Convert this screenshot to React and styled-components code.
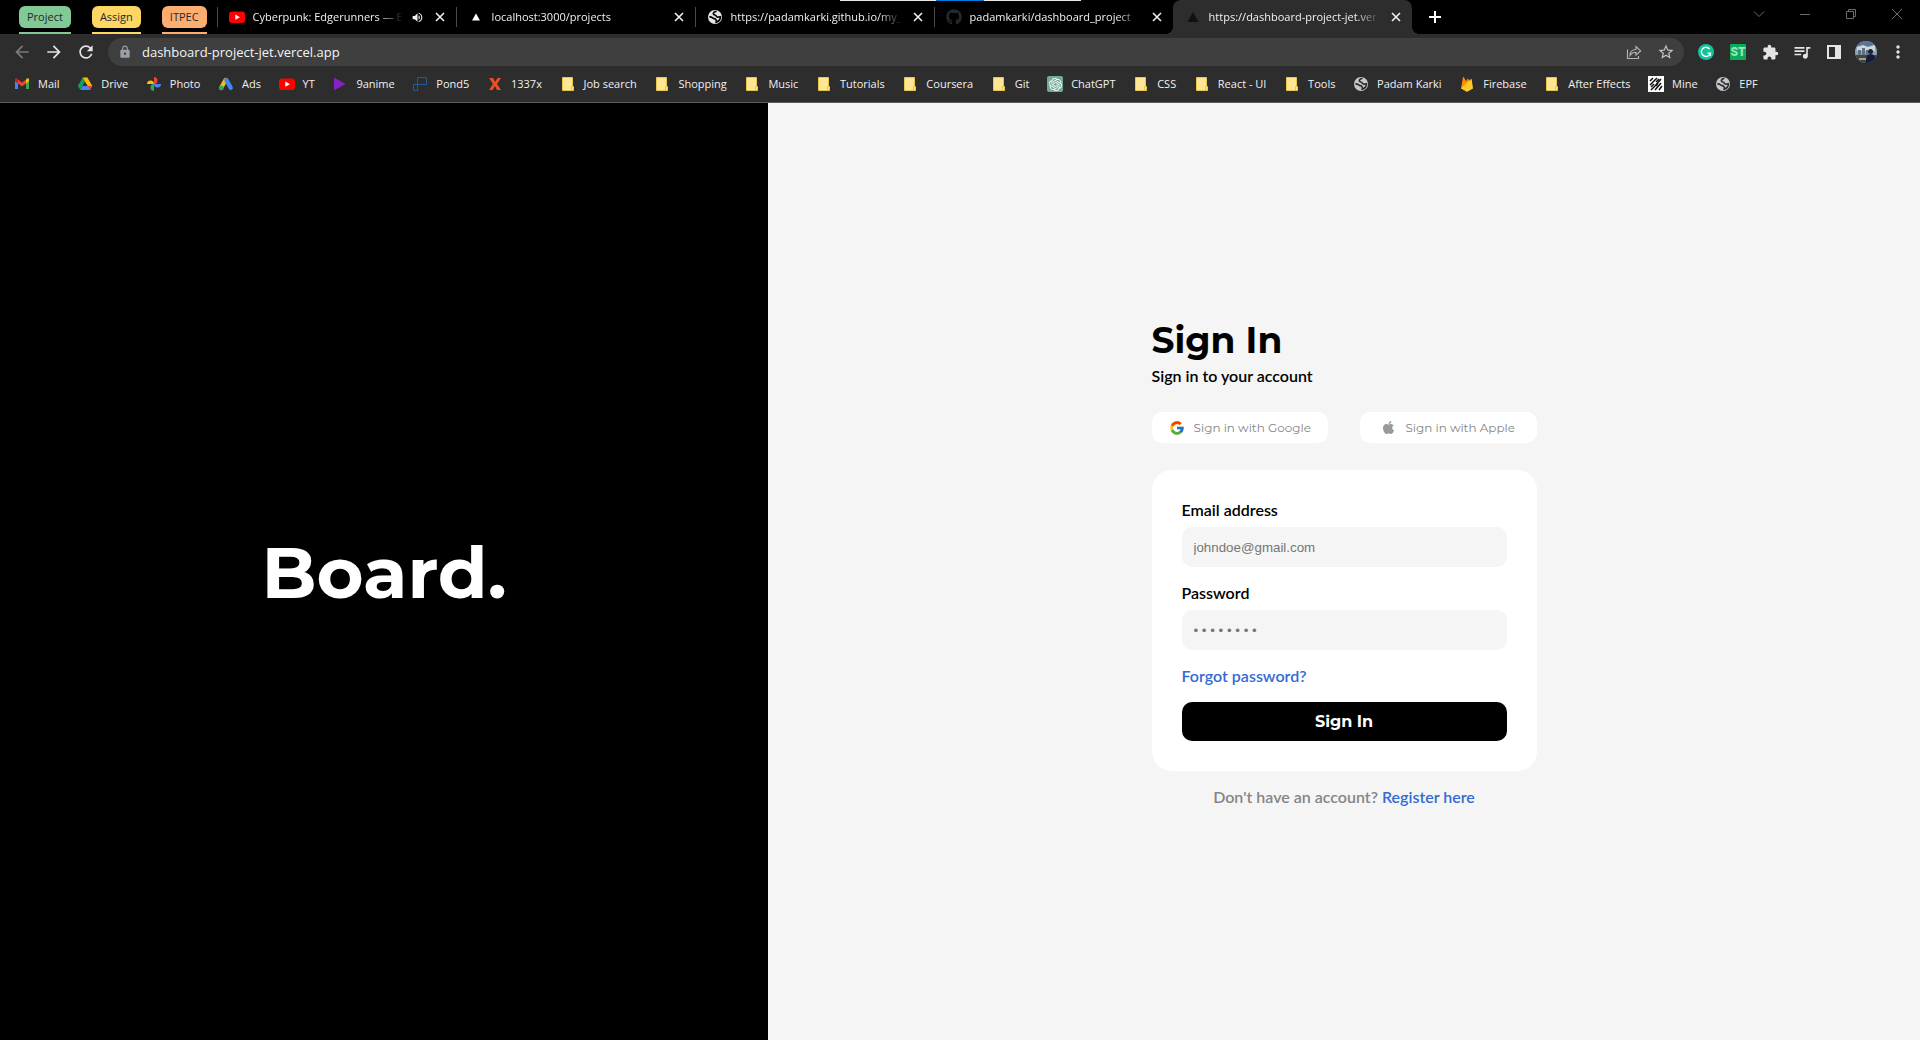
import React from "react";
import styled, { createGlobalStyle, css } from "styled-components";
import { FcGoogle } from "react-icons/fc";
import { FaApple, FaGithub } from "react-icons/fa";
import { SiOpenai } from "react-icons/si";
import {
  MdArrowBack,
  MdArrowForward,
  MdRefresh,
  MdLock,
  MdStarOutline,
  MdExtension,
  MdQueueMusic,
  MdMoreVert,
  MdVolumeUp,
} from "react-icons/md";

const GlobalStyle = createGlobalStyle`
  *, *::before, *::after { box-sizing: border-box; }
  body { margin: 0; background: #f5f5f5; }
  button { font: inherit; cursor: pointer; }
  button, input { margin: 0; border: 0; padding: 0; background: none; color: inherit; outline: none; }
  a { text-decoration: none; color: inherit; }
  svg { display: block; flex: none; }
`;

const uiFont = `"Segoe UI", "Open Sans", "Noto Sans", sans-serif`;
const headingFont = `Montserrat, Inter, sans-serif`;
const bodyFont = `Lato, sans-serif`;

/* ---------- browser chrome ---------- */

const Screen = styled.div`
  min-height: 100vh;
  display: flex;
  flex-direction: column;
`;

const Chrome = styled.header`
  position: relative;
  font: 11px/16px ${uiFont};
  color: #f1f1f1;
  background: #2d2d2d;
  border-bottom: 1px solid #5c5c5c;
`;

const LoadingLine = styled.div`
  position: absolute;
  top: 0;
  left: 840px;
  width: 241px;
  height: 1px;
  background: linear-gradient(90deg, #e8e8e8 96px, #0078d7 96px 144px, #e8e8e8 144px);
`;

const TabStrip = styled.div`
  display: flex;
  height: 34px;
  background: #000;
`;

const Groups = styled.div`
  display: flex;
  gap: 21px;
  padding: 6px 10px 0 19px;
  flex: none;
`;

const Group = styled.button`
  display: flex;
  flex-direction: column;
  justify-content: space-between;
  height: 28px;
  color: #24292c;
  border-bottom: 2px solid ${(p) => p.$color};

  span {
    height: 22px;
    padding: 0 8px;
    border-radius: 6px;
    line-height: 21px;
    background: ${(p) => p.$color};
  }
`;

const flare = css`
  content: "";
  position: absolute;
  bottom: 0;
  width: 8px;
  height: 8px;
`;

const Tab = styled.div`
  position: relative;
  display: flex;
  align-items: center;
  flex: 0 1 239px;
  min-width: 0;
  padding: 0 8px 0 12px;

  ${(p) =>
    p.$active
      ? css`
          background: #2d2d2d;
          border-radius: 8px 8px 0 0;
          &::before {
            ${flare}
            left: -8px;
            background: radial-gradient(circle at 0 0, transparent 8px, #2d2d2d 8px);
          }
          &::after {
            ${flare}
            right: -8px;
            background: radial-gradient(circle at 100% 0, transparent 8px, #2d2d2d 8px);
          }
        `
      : css`
          background: linear-gradient(#4a4a4a, #4a4a4a) left 7px / 1px 20px no-repeat;
        `}
`;

const TabButton = styled.button`
  flex: 1;
  min-width: 0;
  display: flex;
  align-items: center;
  gap: 8px;
  height: 34px;
  text-align: left;

  span {
    flex: 1;
    overflow: hidden;
    white-space: nowrap;
    mask-image: linear-gradient(90deg, #000 calc(100% - 24px), transparent);
  }
`;

const CloseButton = styled.button`
  width: 16px;
  height: 16px;
  display: grid;
  place-items: center;
  margin-left: 8px;
`;

const NewTab = styled.button`
  width: 28px;
  display: grid;
  place-items: center;
  margin-left: 9px;
`;

const WindowButtons = styled.div`
  display: flex;
  margin-left: auto;
  height: 28px;
  color: #6b6b6b;

  button {
    width: 46px;
    display: grid;
    place-items: center;
  }
`;

const Toolbar = styled.div`
  display: flex;
  align-items: center;
  height: 32px;
  padding: 4px 6px 0;
`;

const ToolButton = styled.button`
  width: 32px;
  height: 28px;
  flex: none;
  display: grid;
  place-items: center;
  color: ${(p) => p.$color || "#e4e4e4"};
`;

const NavButtons = styled.div`
  display: flex;
  padding-right: 6px;
`;

const AddressBar = styled.label`
  flex: 1;
  display: flex;
  align-items: center;
  height: 28px;
  padding: 0 2px 0 10px;
  border-radius: 14px;
  background: #3f3f3f;
  color: #9aa0a6;
  margin-right: 6px;

  input {
    flex: 1;
    height: 28px;
    padding-left: 10px;
    font: 13px/16px ${uiFont};
    color: #f4f4f4;
  }
`;

const Bookmarks = styled.nav`
  display: flex;
  align-items: center;
  justify-content: space-between;
  max-width: 1772px;
  height: 36px;
  padding: 0 14px;
  gap: 16px;
  white-space: nowrap;
`;

const Bookmark = styled.a`
  display: flex;
  align-items: center;
  gap: 8px;
`;

/* ---------- page ---------- */

const Page = styled.main`
  flex: 1;
  display: grid;
  grid-template-columns: 2fr 3fr;
  background: #f5f5f5;
`;

const Brand = styled.section`
  display: grid;
  place-items: center;
  background: #000;
  color: #fff;
  font: 700 72px/88px ${headingFont};
`;

const FormSide = styled.section`
  display: flex;
  align-items: center;
  justify-content: center;
  font: 600 16px/20px ${bodyFont};
  color: #000;
`;

const Column = styled.div`
  width: 385px;
  padding-bottom: 18px;
`;

const Title = styled.h1`
  margin: 0 0 4px;
  font: 700 36px/44px ${headingFont};
`;

const Subtitle = styled.p`
  margin: 0;
`;

const Providers = styled.div`
  display: grid;
  grid-template-columns: 1fr 1fr;
  gap: 32px;
  margin: 26px 0 27px;
`;

const Provider = styled.button`
  display: flex;
  align-items: center;
  justify-content: center;
  gap: 9px;
  height: 31px;
  border-radius: 10px;
  background: #fff;
  color: #858585;
  font: 400 12px/16px ${headingFont};
`;

const Card = styled.form`
  padding: 30px;
  border-radius: 20px;
  background: #fff;
`;

const Label = styled.label`
  display: block;
  margin-bottom: 7px;
`;

const Field = styled.input`
  display: block;
  width: 100%;
  height: 40px;
  padding: 0 12px;
  margin-bottom: 16px;
  border-radius: 10px;
  background: #f5f5f5;
  font-family: Arial, "Liberation Sans", sans-serif;

  &::placeholder {
    color: #757575;
    opacity: 1;
  }
`;

const Link = styled.a`
  color: #346bd4;
`;

const Submit = styled.button`
  display: block;
  width: 100%;
  height: 39px;
  margin-top: 16px;
  border-radius: 10px;
  background: #000;
  color: #fff;
  font: 700 16px/20px ${headingFont};
`;

const Register = styled.p`
  margin: 16px 0 0;
  text-align: center;
  color: #858585;
`;

/* ---------- icons ---------- */

const Svg = ({ size = 16, children, ...rest }) => (
  <svg width={size} height={size} viewBox="0 0 16 16" fill="none" aria-hidden="true" {...rest}>
    {children}
  </svg>
);

const CloseIcon = () => (
  <Svg>
    <path d="M4 4l8 8M12 4l-8 8" stroke="#f1f1f1" strokeWidth="1.6" />
  </Svg>
);
const YouTube = () => (
  <Svg>
    <rect y="2.5" width="16" height="11.5" rx="3" fill="#f00" />
    <path d="M6.3 5.6v5.2l4.6-2.6z" fill="#fff" />
  </Svg>
);
const Triangle = ({ color = "#fff", big }) => (
  <Svg>
    <path d={big ? "M8 3l5.5 10h-11z" : "M8 4.5l4 7H4z"} fill={color} />
  </Svg>
);
const Globe = ({ color = "#c4c7cc", ground = "#2d2d2d" }) => (
  <Svg>
    <circle cx="8" cy="8" r="7" fill={color} />
    <path
      d="M9.500 2.300C8 2.600 6.300 3.200 6.300 4.800c0 1.500 2.200 1 2.800 2 .5.900.6 1.300 1.700 1.300 1 0 1.500-.3 2.600-.2-.1 2.500-1.700 4.600-4.200 5.200.3-1.400.3-2.200-.6-2.900C7.600 9.500 6.500 9.700 5.600 8.900 4.800 8.200 3.600 7.800 2.400 7.900"
      stroke={ground}
      strokeWidth="1.600"
    />
  </Svg>
);
const Folder = () => (
  <Svg>
    <path d="M2.500 1.500h10v9h1v4h-11z" fill="#ffe694" stroke="#e9c54c" />
    <path d="M11.500 14v-3.500h1.500" stroke="#e9c54c" />
  </Svg>
);
const Gmail = () => (
  <Svg>
    <path d="M1 4v9h3V7z" fill="#4285f4" />
    <path d="M12 7v6h3V4z" fill="#34a853" />
    <path d="M4 3.500l4 3 4-3V7.500l-4 3-4-3z" fill="#ea4335" />
    <path d="M1 3.500C1 2 3 2 4 3.400v4.100L1 5.200z" fill="#c5221f" />
    <path d="M15 3.500C15 2 13 2 12 3.400v4.100l3-2.300z" fill="#fbbc04" />
  </Svg>
);
const Drive = () => (
  <Svg>
    <path d="M5.600 1.500L8 5.800 3.300 14 .8 9.900z" fill="#0f9d58" />
    <path d="M5.600 1.500h4.800l4.900 8.400h-4.800z" fill="#ffba00" />
    <path d="M5.600 9.900h9.700L12.900 14H3.300z" fill="#4285f4" />
    <path d="M10.500 9.900h4.800L12.900 14z" fill="#ea4335" />
    <path d="M8 5.900l2.400 4H5.700z" fill="#2d2d2d" />
  </Svg>
);
const Photos = () => (
  <Svg>
    <path d="M8 1a3.500 3.500 0 0 1 0 7z" fill="#ea4335" />
    <path d="M15 8a3.500 3.500 0 0 1-7 0z" fill="#4285f4" />
    <path d="M8 15a3.500 3.500 0 0 1 0-7z" fill="#34a853" />
    <path d="M1 8a3.500 3.500 0 0 1 7 0z" fill="#fbbc04" />
  </Svg>
);
const Ads = () => (
  <Svg>
    <path d="M7.500 4L3.200 11.800" stroke="#fbbc04" strokeWidth="4.200" strokeLinecap="round" />
    <path d="M8.400 4l4.300 7.800" stroke="#4285f4" strokeWidth="4.400" strokeLinecap="round" />
    <circle cx="3.300" cy="12" r="2.400" fill="#34a853" />
  </Svg>
);
const Play = () => (
  <Svg>
    <path d="M2 1.500v13L13.500 8z" fill="#8522c2" />
  </Svg>
);
const Pond = () => (
  <Svg stroke="#205b9d">
    <path d="M5.500 1.500h9v7h-9zM1.500 8.500h4v6h-4zM5.500 5.500v3" />
  </Svg>
);
const LetterX = () => (
  <Svg>
    <path d="M2 2h4l2.200 4L10.500 2H14L10 8l4 6h-4l-2-4-2.300 4H2l4-6z" fill="#ee4d23" />
  </Svg>
);
const Chat = styled.span`
  width: 16px;
  height: 16px;
  display: grid;
  place-items: center;
  border-radius: 2px;
  background: #74aa9c;
  color: #fff;
`;
const Fire = () => (
  <Svg>
    <path d="M2 12.500L4 1.500c.1-.6.700-.6 1-.1l2 3.800L8.500 3c.3-.5.700-.5 1 0l4 9.500z" fill="#ff9100" />
    <path d="M2 12.500L11.800 3.200c.4-.3.800-.1.900.3l1.300 9-5.300 3c-.5.300-1 .3-1.500 0z" fill="#ffca28" />
  </Svg>
);
const Mine = () => (
  <Svg>
    <path d="M0 0h16v16H0z" fill="#fff" />
    <path
      d="M2 5l3-3M2 9l7-7M3 11l3-3M3 14l4-4 6-7M7 14l6-7M11 14l3-4M8 6l3-3M8 10l2-3"
      stroke="#111"
      strokeWidth="1.500"
    />
  </Svg>
);
const Share = () => (
  <Svg stroke="#b4b4b4" strokeWidth="1.100">
    <path d="M1.500 5.500v9h11V12M4 11.500c.2-4 2.500-6 6-6V2.500l4.700 4.500-4.700 4V8.300C7.300 8.300 5.500 9.200 4 11.500z" />
  </Svg>
);
const GrammarIcon = () => (
  <Svg>
    <circle cx="8" cy="8" r="8" fill="#15c39a" />
    <path d="M11.600 5A4.600 4.600 0 1 0 12.400 9.200H9.500M12.400 9v3" stroke="#fff" strokeWidth="1.300" />
  </Svg>
);
const StBadge = styled.span`
  width: 16px;
  height: 16px;
  border-radius: 1px;
  background: #0cab5a;
  color: #9be3b8;
  font: 900 12px/16px Roboto, sans-serif;
`;
const SidePanel = () => (
  <Svg>
    <path d="M2 2h12v12H2z" stroke="#e4e4e4" strokeWidth="2" />
    <path d="M9 2h5v12H9z" fill="#e4e4e4" />
  </Svg>
);
const Avatar = () => (
  <svg width="22" height="22" viewBox="0 0 22 22" aria-hidden="true">
    <defs>
      <clipPath id="avatar">
        <circle cx="11" cy="11" r="11" />
      </clipPath>
    </defs>
    <g clipPath="url(#avatar)">
      <path d="M0 0h22v22H0z" fill="#8ea3b8" />
      <path d="M0 0h22v3L12 6 0 5z" fill="#5a7594" />
      <path d="M2 6l6-2 5 2 7-2v6H2z" fill="#cdd5dd" />
      <path d="M3 9h3v6H3zM7 7h3v8H7zM11 9h2v6h-2z" fill="#5d7183" />
      <path d="M0 14h22v8H0z" fill="#3c4a3c" />
      <path d="M4 17h7v2H4z" fill="#b49a83" />
      <circle cx="15.500" cy="10.500" r="2.500" fill="#20202a" />
      <path d="M11 22c0-6 1-9 4.500-9s5.500 3 5.500 9z" fill="#151b3d" />
    </g>
  </svg>
);
const Line = ({ d, size = 12 }) => (
  <svg width={size} height={size} viewBox="0 0 12 12" fill="none" stroke="currentColor" aria-hidden="true">
    <path d={d} />
  </svg>
);

/* ---------- data ---------- */

const groups = [
  ["Project", "#81c995"],
  ["Assign", "#fdd663"],
  ["ITPEC", "#fcad70"],
];

const tabs = [
  { title: "Cyberpunk: Edgerunners — E", icon: <YouTube />, sound: true },
  { title: "localhost:3000/projects", icon: <Triangle /> },
  { title: "https://padamkarki.github.io/my_", icon: <Globe color="#e4e4e4" ground="#000" /> },
  { title: "padamkarki/dashboard_project", icon: <FaGithub size={16} color="#24292e" /> },
  { title: "https://dashboard-project-jet.ver", icon: <Triangle color="#111" big />, active: true },
];

const bookmarks = [
  ["Mail", <Gmail />],
  ["Drive", <Drive />],
  ["Photo", <Photos />],
  ["Ads", <Ads />],
  ["YT", <YouTube />],
  ["9anime", <Play />],
  ["Pond5", <Pond />],
  ["1337x", <LetterX />],
  ["Job search", <Folder />],
  ["Shopping", <Folder />],
  ["Music", <Folder />],
  ["Tutorials", <Folder />],
  ["Coursera", <Folder />],
  ["Git", <Folder />],
  ["ChatGPT", <Chat><SiOpenai size={13} /></Chat>],
  ["CSS", <Folder />],
  ["React - UI", <Folder />],
  ["Tools", <Folder />],
  ["Padam Karki", <Globe />],
  ["Firebase", <Fire />],
  ["After Effects", <Folder />],
  ["Mine", <Mine />],
  ["EPF", <Globe />],
];

/* ---------- app ---------- */

function BrowserChrome() {
  return (
    <Chrome>
      <TabStrip>
        <Groups>
          {groups.map(([name, color]) => (
            <Group key={name} $color={color}>
              <span>{name}</span>
            </Group>
          ))}
        </Groups>
        {tabs.map((tab) => (
          <Tab key={tab.title} $active={tab.active}>
            <TabButton>
              {tab.icon}
              <span>{tab.title}</span>
              {tab.sound && <MdVolumeUp size={13} />}
            </TabButton>
            <CloseButton aria-label="Close tab">
              <CloseIcon />
            </CloseButton>
          </Tab>
        ))}
        <NewTab aria-label="New tab">
          <Svg>
            <path d="M8 2v12M2 8h12" stroke="#fff" strokeWidth="2" />
          </Svg>
        </NewTab>
        <WindowButtons>
          <button aria-label="Search tabs"><Line d="M1 3.500l5 5 5-5" /></button>
          <button aria-label="Minimize"><Line d="M1 6.500h10" /></button>
          <button aria-label="Restore"><Line d="M1.500 3.500h7v7h-7zM3.500 3.500v-2h7v7h-2" /></button>
          <button aria-label="Close window"><Line d="M1 1l10 10M11 1L1 11" /></button>
        </WindowButtons>
      </TabStrip>
      <LoadingLine />
      <Toolbar>
        <NavButtons>
          <ToolButton aria-label="Back" $color="#7b7b7b"><MdArrowBack size={20} /></ToolButton>
          <ToolButton aria-label="Forward"><MdArrowForward size={20} /></ToolButton>
          <ToolButton aria-label="Reload"><MdRefresh size={20} /></ToolButton>
        </NavButtons>
        <AddressBar>
          <MdLock size={14} />
          <input aria-label="Address" defaultValue="dashboard-project-jet.vercel.app" />
          <ToolButton aria-label="Share"><Share /></ToolButton>
          <ToolButton aria-label="Bookmark" $color="#c4c4c4"><MdStarOutline size={18} /></ToolButton>
        </AddressBar>
        <ToolButton aria-label="Grammar"><GrammarIcon /></ToolButton>
        <ToolButton><StBadge>ST</StBadge></ToolButton>
        <ToolButton aria-label="Extensions"><MdExtension size={17} /></ToolButton>
        <ToolButton aria-label="Media"><MdQueueMusic size={20} /></ToolButton>
        <ToolButton aria-label="Side panel"><SidePanel /></ToolButton>
        <ToolButton aria-label="Profile"><Avatar /></ToolButton>
        <ToolButton aria-label="Menu"><MdMoreVert size={20} /></ToolButton>
      </Toolbar>
      <Bookmarks>
        {bookmarks.map(([name, icon]) => (
          <Bookmark key={name} href="#">
            {icon}
            {name}
          </Bookmark>
        ))}
      </Bookmarks>
    </Chrome>
  );
}

export default function App() {
  return (
    <Screen>
      <GlobalStyle />
      <BrowserChrome />
      <Page>
        <Brand>Board.</Brand>
        <FormSide>
          <Column>
            <Title>Sign In</Title>
            <Subtitle>Sign in to your account</Subtitle>
            <Providers>
              <Provider><FcGoogle size={16} />Sign in with Google</Provider>
              <Provider><FaApple size={15} color="#999" />Sign in with Apple</Provider>
            </Providers>
            <Card onSubmit={(e) => e.preventDefault()}>
              <Label htmlFor="email">Email address</Label>
              <Field id="email" type="email" placeholder="johndoe@gmail.com" />
              <Label htmlFor="password">Password</Label>
              <Field id="password" type="password" placeholder="• • • • • • • •" />
              <Link href="#">Forgot password?</Link>
              <Submit type="submit">Sign In</Submit>
            </Card>
            <Register>
              Don't have an account? <Link href="#">Register here</Link>
            </Register>
          </Column>
        </FormSide>
      </Page>
    </Screen>
  );
}
